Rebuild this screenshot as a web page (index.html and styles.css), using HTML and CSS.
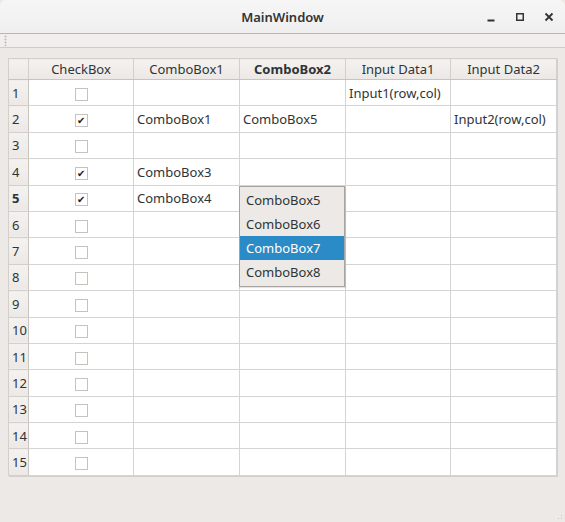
FILE: index.html
```html
<!DOCTYPE html>
<html lang="en">
<head>
    <meta charset="UTF-8">
    <title>MainWindow</title>
    <link rel="stylesheet" href="styles.css">
</head>
<body>
    <div class="window">
        <!-- Title bar -->
        <header class="titlebar">
            <span class="title">MainWindow</span>
            <div class="controls">
                <svg class="btn" width="12" height="12" viewBox="0 0 12 12"><rect x="2.5" y="8.5" width="7" height="2" fill="#2e3436"/></svg>
                <svg class="btn" width="12" height="12" viewBox="0 0 12 12"><rect x="2.75" y="2.75" width="6.5" height="6.5" fill="none" stroke="#2e3436" stroke-width="1.5"/></svg>
                <svg class="btn" width="12" height="12" viewBox="0 0 12 12"><path d="M2.5 2.5 L9.5 9.5 M9.5 2.5 L2.5 9.5" stroke="#2e3436" stroke-width="1.8"/></svg>
            </div>
        </header>

        <!-- Tool bar -->
        <div class="toolbar"><span class="handle"></span></div>

        <main class="central">
            <table class="grid">
                <thead>
                    <tr>
                        <th class="corner"></th>
                        <th class="c1">CheckBox</th>
                        <th class="c2">ComboBox1</th>
                        <th class="c3 current">ComboBox2</th>
                        <th class="c4">Input Data1</th>
                        <th class="c5">Input Data2</th>
                    </tr>
                </thead>
                <tbody id="rows"></tbody>
            </table>
        </main>
        <span class="grip"></span>
    </div>

    <script>
        // cells: [checked, combo1, combo2, input1, input2]
        const data = [
            [false, '', '', 'Input1(row,col)', ''],
            [true, 'ComboBox1', 'ComboBox5', '', 'Input2(row,col)'],
            [false, '', '', '', ''],
            [true, 'ComboBox3', '', '', ''],
            [true, 'ComboBox4', '', '', ''],
        ];
        const body = document.getElementById('rows');
        for (let i = 0; i < 15; i++) {
            const r = data[i] || [false, '', '', '', ''];
            const tr = document.createElement('tr');
            let html = '<th class="rowhead' + (i === 4 ? ' current' : '') + '">' + (i + 1) + '</th>';
            html += '<td class="check"><span class="box">' + (r[0] ? '&#10004;' : '') + '</span></td>';
            for (let c = 1; c < 5; c++) {
                if (i === 4 && c === 2) {
                    html += '<td class="popcell"><ul class="popup">' +
                        '<li>ComboBox5</li><li>ComboBox6</li>' +
                        '<li class="selected">ComboBox7</li><li>ComboBox8</li></ul></td>';
                } else {
                    html += '<td>' + r[c] + '</td>';
                }
            }
            tr.innerHTML = html;
            body.appendChild(tr);
        }
    </script>
</body>
</html>
```

FILE: styles.css
```css
/* Global */
body {
    margin: 0;
    padding: 0;
    font-family: 'Noto Sans', 'Open Sans', sans-serif;
    font-size: 13px;
    color: #2e3436;
    background-color: #ede9e6;
}

.window {
    position: relative;
    width: 565px;
    height: 522px;
    overflow: hidden;
    background-color: #ede9e6;
}

/* Title bar */
.titlebar {
    height: 33px;
    background: linear-gradient(#f6f6f6, #efefef);
    border-bottom: 1px solid #b6b6b3;
    border-radius: 6px 6px 0 0;
    display: flex;
    align-items: center;
    justify-content: center;
    position: relative;
}

.titlebar .title {
    font-weight: 600;
    font-size: 13px;
    color: #333;
}

.titlebar .controls {
    position: absolute;
    right: 10px;
    top: 11px;
    display: flex;
    gap: 17px;
}

/* Tool bar */
.toolbar {
    height: 13px;
    background-color: #f1eeeb;
    border-bottom: 1px solid #cfcbc7;
    position: relative;
}

.toolbar .handle {
    position: absolute;
    left: 4px;
    top: 1px;
    width: 3px;
    height: 11px;
    background-image: radial-gradient(circle, #c4c0bc 45%, transparent 50%);
    background-size: 3px 3px;
}

/* Central widget */
.central {
    padding: 10px 8px 0 8px;
}

.grid {
    border-collapse: collapse;
    table-layout: fixed;
    width: 549px;
    background-color: #fff;
    border: 1px solid #bdb9b5;
    box-shadow: 1px 1px 0 #d3cfcb;
}

.grid th {
    font-weight: normal;
    background: linear-gradient(#f4f2f0, #ece8e5);
    border: 1px solid #d3cfcb;
    padding: 0;
    color: #2e3436;
}

.grid thead th {
    height: 20px;
    text-align: center;
    border-bottom-color: #c8c4c0;
}

.grid .current {
    font-weight: bold;
}

.grid .corner { width: 19px; }
.grid .c1 { width: 104px; }
.grid .c2 { width: 105px; }
.grid .c3 { width: 105px; }
.grid .c4 { width: 104px; }
.grid .c5 { width: 105px; }

.grid .rowhead {
    text-align: left;
    padding-left: 3px;
    height: 25.4px;
    border-right-color: #c8c4c0;
}

.grid td {
    border: 1px solid #d4d4d4;
    padding: 0 0 0 3px;
    white-space: nowrap;
    overflow: visible;
    color: #2e3436;
}

.grid td.check {
    text-align: center;
    padding: 0;
}

.box {
    display: inline-block;
    width: 11px;
    height: 11px;
    border: 1px solid #c6c2be;
    background-color: #fff;
    vertical-align: middle;
    font-size: 10px;
    line-height: 11px;
    text-align: center;
    color: #1c1c1c;
}

/* Combo popup */
.popcell {
    position: relative;
}

.popup {
    position: absolute;
    left: -1px;
    top: 0;
    z-index: 10;
    width: 104px;
    list-style: none;
    margin: 0;
    padding: 1px 0;
    background-color: #ede9e6;
    border: 1px solid #a7a3a0;
    box-shadow: 1px 1px 1px rgba(0, 0, 0, 0.1);
}

.popup li {
    height: 24.3px;
    line-height: 24.3px;
    padding-left: 6px;
    color: #2e3436;
}

.popup li.selected {
    background-color: #2a8bc6;
    color: #fff;
}

.grip {
    position: absolute;
    right: 1px;
    bottom: 1px;
    width: 10px;
    height: 10px;
    background-image: radial-gradient(circle, #c8c4c0 40%, transparent 45%);
    background-size: 3px 3px;
    clip-path: polygon(100% 0, 100% 100%, 0 100%);
}
```
